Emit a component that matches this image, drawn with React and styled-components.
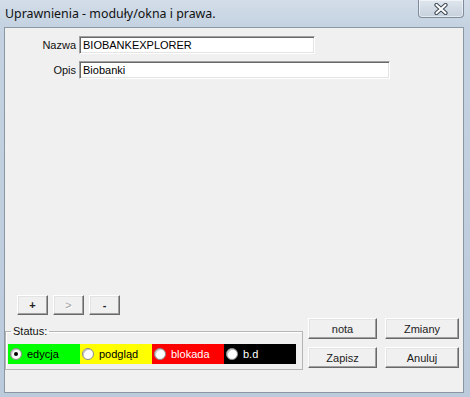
import React from "react";
import styled, { createGlobalStyle } from "styled-components";

const GlobalStyle = createGlobalStyle`
  html, body {
    margin: 0;
    padding: 0;
    background: #bfcddd;
  }
`;

const Window = styled.div`
  width: 470px;
  height: 397px;
  display: flex;
  flex-direction: column;
  background: linear-gradient(180deg, #d3dde9 0px, #c4d2e1 27px, #bccbdc 100%);
  font-family: "Liberation Sans", Arial, sans-serif;
  overflow: hidden;
`;

const TitleBar = styled.div`
  height: 27px;
  flex: 0 0 27px;
  display: flex;
  justify-content: space-between;
  align-items: flex-start;
`;

const Title = styled.span`
  font-family: "Noto Sans", "Liberation Sans", sans-serif;
  font-size: 12.4px;
  line-height: 28px;
  color: #111;
  padding-left: 5px;
`;

const CloseButton = styled.div`
  width: 44px;
  height: 17px;
  margin-right: 6px;
  border: 1px solid #7f8c9b;
  border-top: none;
  border-radius: 0 0 4px 4px;
  background: linear-gradient(180deg, #dfe6ee, #c6d1dd);
  box-shadow: inset 0 0 0 1px rgba(255, 255, 255, 0.55);
  display: flex;
  align-items: center;
  justify-content: center;
`;

const Client = styled.div`
  flex: 1;
  margin: 0 6px 4px 4px;
  background: #f0f0f0;
  border: 1px solid #8c97a4;
  display: flex;
  flex-direction: column;
  padding-top: 8px;
`;

const Form = styled.div`
  display: grid;
  grid-template-columns: 71px auto;
  column-gap: 3px;
  row-gap: 7px;
  align-items: center;
`;

const Label = styled.label`
  font-size: 11px;
  color: #111;
  text-align: right;
`;

const TextBox = styled.div`
  width: ${(p) => p.width}px;
  height: 18px;
  box-sizing: border-box;
  background: #fff;
  border: 1px solid;
  border-color: #a0a0a0 #fff #fff #a0a0a0;
  box-shadow: inset 1px 1px 0 #696969, inset -1px -1px 0 #e3e3e3;
  font-size: 11px;
  line-height: 16px;
  padding-left: 3px;
  color: #000;
  white-space: nowrap;
`;

const Spacer = styled.div`
  flex: 1;
`;

const ToolRow = styled.div`
  display: flex;
  gap: 5px;
  padding-left: 12px;
  margin-bottom: 3px;
`;

const RaisedButton = styled.button`
  box-sizing: border-box;
  width: ${(p) => p.width}px;
  height: ${(p) => p.height}px;
  padding: 0;
  background: #f0f0f0;
  border: 1px solid;
  border-color: #fff #696969 #696969 #fff;
  box-shadow: inset -1px -1px 0 #a0a0a0, inset 1px 1px 0 #e3e3e3;
  font-family: "Liberation Sans", Arial, sans-serif;
  font-size: 11px;
  font-weight: ${(p) => (p.bold ? 700 : 400)};
  color: ${(p) => (p.disabled ? "#a0a0a0" : "#222")};
  text-shadow: ${(p) => (p.disabled ? "1px 1px 0 #fff" : "none")};
  display: flex;
  align-items: center;
  justify-content: center;
`;

const BottomRow = styled.div`
  display: flex;
  align-items: flex-end;
  gap: 5px;
  padding: 0 0 22px 0;
`;

const GroupBox = styled.fieldset`
  width: 298px;
  box-sizing: border-box;
  margin: 0;
  padding: 6px 6px 5px 2px;
  border: 1px solid #b5b5b5;
  box-shadow: inset 1px 1px 0 #fff;
`;

const Legend = styled.legend`
  font-size: 11px;
  line-height: 13px;
  padding: 0 2px;
  margin-left: 3px;
  color: #111;
`;

const Band = styled.div`
  display: flex;
  height: 20px;
`;

const Segment = styled.div`
  width: 72px;
  height: 20px;
  background: ${(p) => p.bg};
  color: ${(p) => p.fg};
  display: flex;
  align-items: center;
  gap: 5px;
  padding-left: 2px;
  box-sizing: border-box;
  font-size: 11px;
`;

const Radio = styled.span`
  width: 12px;
  height: 12px;
  box-sizing: border-box;
  border-radius: 50%;
  background: #fff;
  border: 1px solid #8a8a8a;
  box-shadow: inset 1px 1px 0 #c8c8c8;
  display: flex;
  align-items: center;
  justify-content: center;
  flex: 0 0 12px;

  &::after {
    content: "";
    width: 4px;
    height: 4px;
    border-radius: 50%;
    background: ${(p) => (p.checked ? "#000" : "transparent")};
  }
`;

const ButtonGrid = styled.div`
  display: grid;
  grid-template-columns: 69px 74px;
  column-gap: 8px;
  row-gap: 8px;
  margin-bottom: 2px;
`;

const statuses = [
  { label: "edycja", bg: "#00ff00", fg: "#000", checked: true },
  { label: "podgląd", bg: "#ffff00", fg: "#000" },
  { label: "blokada", bg: "#ff0000", fg: "#fff" },
  { label: "b.d", bg: "#000", fg: "#fff" },
];

const CloseIcon = () => (
  <svg width="14" height="12" viewBox="0 0 14 12">
    <path
      d="M2.5 2 L11.5 10 M11.5 2 L2.5 10"
      stroke="#3c4654"
      strokeWidth="4.2"
      strokeLinecap="round"
    />
    <path
      d="M2.5 2 L11.5 10 M11.5 2 L2.5 10"
      stroke="#fff"
      strokeWidth="2.2"
      strokeLinecap="round"
    />
  </svg>
);

export default function App() {
  return (
    <>
      <GlobalStyle />
      <Window>
        <TitleBar>
          <Title>Uprawnienia - moduły/okna i prawa.</Title>
          <CloseButton>
            <CloseIcon />
          </CloseButton>
        </TitleBar>
        <Client>
          <Form>
            <Label>Nazwa</Label>
            <TextBox width={236}>BIOBANKEXPLORER</TextBox>
            <Label>Opis</Label>
            <TextBox width={311}>Biobanki</TextBox>
          </Form>
          <Spacer />
          <ToolRow>
            <RaisedButton width={31} height={20} bold>
              +
            </RaisedButton>
            <RaisedButton width={31} height={20} disabled>
              &gt;
            </RaisedButton>
            <RaisedButton width={31} height={20} bold>
              -
            </RaisedButton>
          </ToolRow>
          <BottomRow>
            <GroupBox>
              <Legend>Status:</Legend>
              <Band>
                {statuses.map((s) => (
                  <Segment key={s.label} bg={s.bg} fg={s.fg}>
                    <Radio checked={s.checked} />
                    {s.label}
                  </Segment>
                ))}
              </Band>
            </GroupBox>
            <ButtonGrid>
              <RaisedButton width={69} height={21}>nota</RaisedButton>
              <RaisedButton width={74} height={21}>Zmiany</RaisedButton>
              <RaisedButton width={69} height={21}>Zapisz</RaisedButton>
              <RaisedButton width={74} height={21}>Anuluj</RaisedButton>
            </ButtonGrid>
          </BottomRow>
        </Client>
      </Window>
    </>
  );
}
